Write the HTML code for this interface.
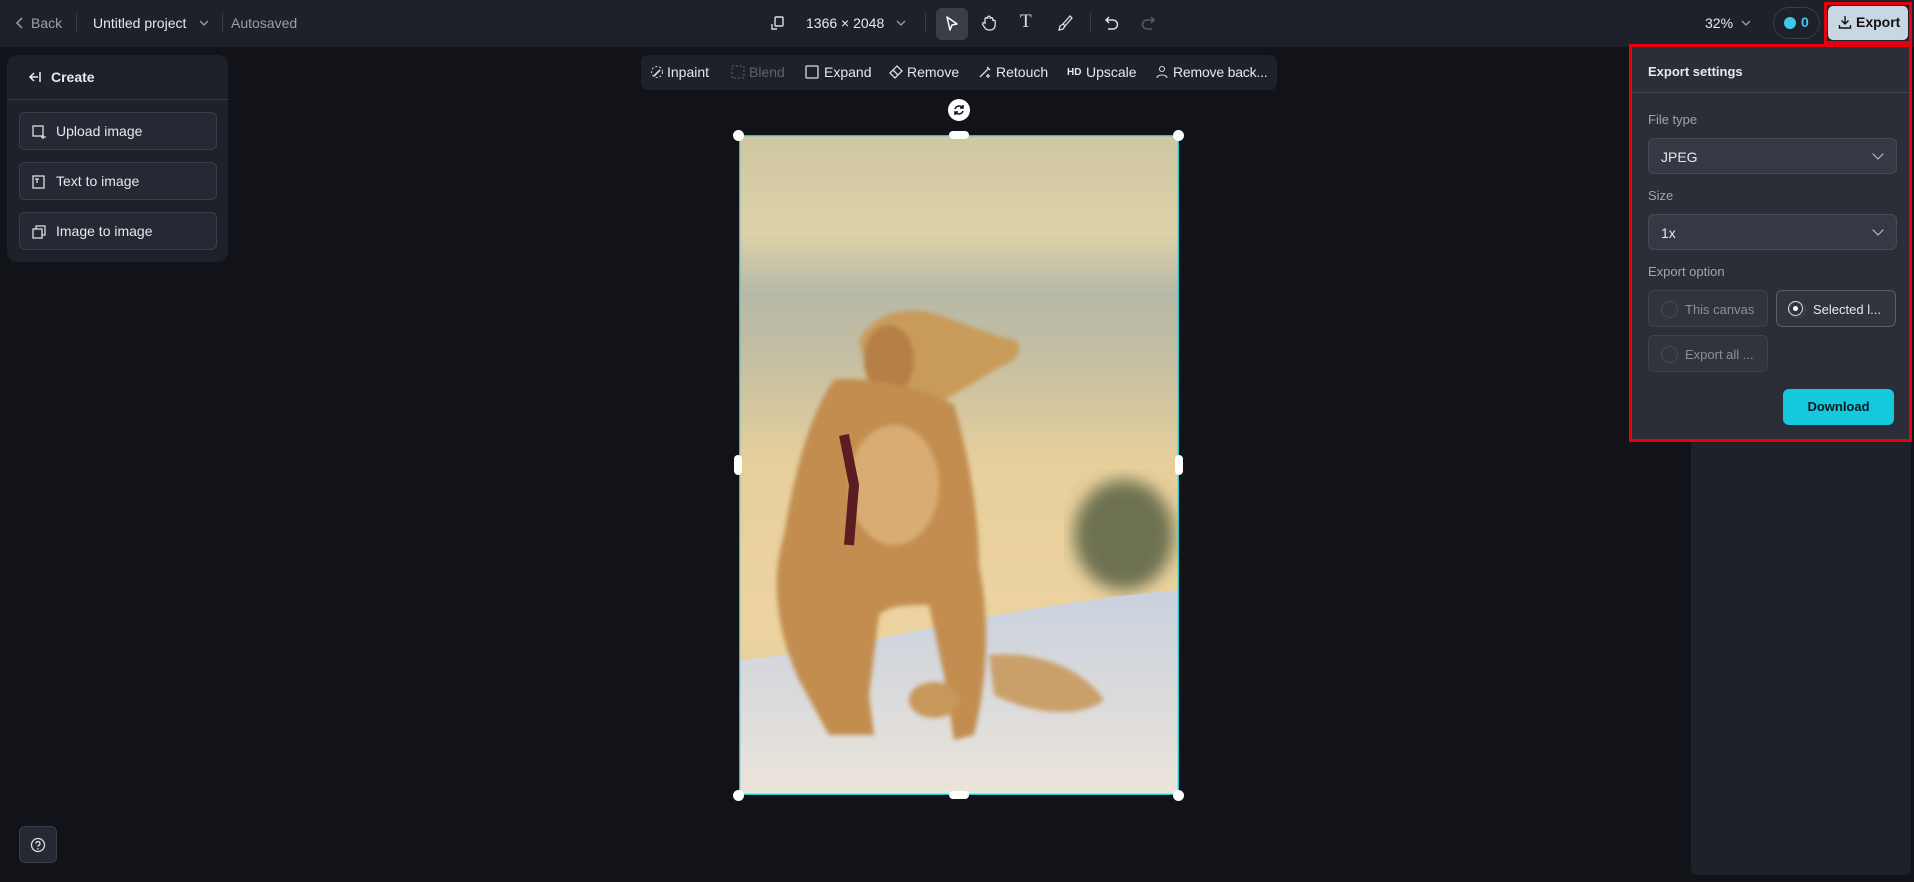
<!DOCTYPE html>
<html><head><meta charset="utf-8"><style>
*{box-sizing:border-box;margin:0;padding:0}
body{width:1914px;height:882px;background:#111318;font-family:"Liberation Sans",sans-serif;color:#e6e8ec;position:relative;overflow:hidden;font-size:14px}
.top{position:absolute;left:0;top:0;width:1914px;height:47px;background:#1e2129}
.abs{position:absolute}
.t{position:absolute;white-space:nowrap}
.panel{position:absolute;left:7px;top:55px;width:221px;height:207px;background:#1e2129;border-radius:10px}
.btn{position:absolute;left:12px;width:198px;height:38px;border:1px solid #3a3e48;background:#252933;border-radius:6px;font-size:14px;padding:10px 0 0 36px;color:#e6e8ec}
.btn svg{position:absolute;left:11px;top:11px}
.tb{position:absolute;left:641px;top:55px;width:636px;height:35px;background:#1e2129;border-radius:7px;font-size:14px}
.tb span{position:absolute;top:9px}
.pop{position:absolute;left:1629px;top:44px;width:283px;height:398px;border:3px solid #e8000f;background:#2b2e37}
.lab{position:absolute;left:16px;font-size:13px;color:#a0a4ad}
.sel{position:absolute;left:16px;width:249px;height:36px;border:1px solid #454a55;background:#353944;border-radius:6px;font-size:14px;padding:10px 0 0 12px}
.sel:after{content:"";position:absolute;right:14px;top:11px;width:7px;height:7px;border-right:1.5px solid #ccc;border-bottom:1.5px solid #ccc;transform:rotate(45deg)}
.rad{position:absolute;width:120px;height:37px;border:1px solid #3d414c;background:#30343d;border-radius:6px;font-size:13px;padding:11px 0 0 36px;color:#8b8f98}
.rad:before{content:"";position:absolute;left:12px;top:10px;width:15px;height:15px;border-radius:50%;border:1px solid #454a55}
</style></head><body>
<div class="top"></div>
<svg class="abs" style="left:15px;top:16px" width="10" height="14"><path d="M7 2 L2 7 L7 12" stroke="#9aa0a8" stroke-width="1.5" fill="none"/></svg>
<div class="t" style="left:31px;top:15px;color:#9aa0a8;font-size:14px">Back</div>
<div class="abs" style="left:76px;top:13px;width:1px;height:20px;background:#3a3e48"></div>
<div class="t" style="left:93px;top:15px;font-size:14px">Untitled project</div>
<svg class="abs" style="left:198px;top:18px" width="12" height="10"><path d="M2 3 L6 7 L10 3" stroke="#9aa0a8" stroke-width="1.3" fill="none"/></svg>
<div class="abs" style="left:222px;top:13px;width:1px;height:20px;background:#3a3e48"></div>
<div class="t" style="left:231px;top:15px;color:#9aa0a8;font-size:14px">Autosaved</div>
<svg class="abs" style="left:770px;top:15px" width="16" height="16"><rect x="5" y="2" width="8" height="9" rx="1" stroke="#ddd" fill="none" stroke-width="1.4"/><path d="M2 9v5h5" stroke="#ddd" fill="none" stroke-width="1.4"/></svg>
<div class="t" style="left:806px;top:15px;font-size:14px">1366 × 2048</div>
<svg class="abs" style="left:895px;top:18px" width="12" height="10"><path d="M2 3 L6 7 L10 3" stroke="#9aa0a8" stroke-width="1.3" fill="none"/></svg>
<div class="abs" style="left:925px;top:13px;width:1px;height:20px;background:#3a3e48"></div>
<div class="abs" style="left:936px;top:8px;width:32px;height:32px;background:#3a3e48;border-radius:6px"></div>
<svg class="abs" style="left:944px;top:15px" width="16" height="18"><path d="M3 2 L13 9 L8 10 L6 15 Z" stroke="#fff" fill="none" stroke-width="1.5" stroke-linejoin="round"/></svg>
<svg class="abs" style="left:980px;top:14px" width="18" height="18"><path d="M5 9V5a1.3 1.3 0 0 1 2.6 0V3.5a1.3 1.3 0 0 1 2.6 0V5a1.3 1.3 0 0 1 2.6 0v2a1.3 1.3 0 0 1 2.4 0v4a5 5 0 0 1-5 5H9a5 5 0 0 1-4-2L3 11a1.3 1.3 0 0 1 2-2z" stroke="#ddd" fill="none" stroke-width="1.3"/></svg>
<div class="t" style="left:1020px;top:11px;font-size:19px;font-family:'Liberation Serif',serif;color:#ddd">T</div>
<svg class="abs" style="left:1056px;top:14px" width="18" height="18"><path d="M14 2 L7 10 L9 12 L16 4 Z M7 10 L4 12 L3 16 L7 15 L9 12" stroke="#ddd" fill="none" stroke-width="1.3"/></svg>
<div class="abs" style="left:1090px;top:13px;width:1px;height:20px;background:#3a3e48"></div>
<svg class="abs" style="left:1103px;top:14px" width="18" height="18"><path d="M6 3 L3 6 L6 9 M3 6 H10 a4.5 4.5 0 0 1 0 9 H5" stroke="#ddd" fill="none" stroke-width="1.5"/></svg>
<svg class="abs" style="left:1139px;top:14px" width="18" height="18"><path d="M12 3 L15 6 L12 9 M15 6 H8 a4.5 4.5 0 0 0 0 9 H13" stroke="#555a63" fill="none" stroke-width="1.5"/></svg>
<div class="t" style="left:1705px;top:15px;font-size:14px">32%</div>
<svg class="abs" style="left:1740px;top:18px" width="12" height="10"><path d="M2 3 L6 7 L10 3" stroke="#9aa0a8" stroke-width="1.3" fill="none"/></svg>
<div class="abs" style="left:1773px;top:7px;width:47px;height:32px;border:1px solid #3a3e48;border-radius:16px"></div>
<div class="abs" style="left:1784px;top:17px;width:12px;height:12px;border-radius:50%;background:#3ec9e8"></div>
<div class="t" style="left:1801px;top:14px;font-size:14px;color:#3ec9e8;font-weight:bold">0</div>
<div class="abs" style="left:1824px;top:2px;width:88px;height:42px;border:3px solid #e8000f"></div>
<div class="abs" style="left:1828px;top:6px;width:80px;height:34px;background:#c9d6e3;border-radius:5px"></div>
<svg class="abs" style="left:1838px;top:15px" width="14" height="14"><path d="M7 1v8M3.5 5.5L7 9l3.5-3.5M1.5 10v3h11v-3" stroke="#111" fill="none" stroke-width="1.4"/></svg>
<div class="t" style="left:1856px;top:14px;font-size:14px;color:#111;font-weight:bold">Export</div>

<div class="panel">
<svg class="abs" style="left:20px;top:15px" width="16" height="14"><path d="M7 3L3 7L7 11M3 7h8M13 2v10" stroke="#eee" fill="none" stroke-width="1.5"/></svg>
<div class="t" style="left:44px;top:14px;font-size:14px;font-weight:bold">Create</div>
<div class="abs" style="left:0;top:44px;width:221px;height:1px;background:#343843"></div>
<div class="btn" style="top:57px"><svg width="16" height="16"><rect x="2" y="2" width="10" height="10" stroke="#ddd" fill="none" stroke-width="1.3"/><path d="M12 10v5M10 13h5" stroke="#ddd" stroke-width="1.3"/></svg>Upload image</div>
<div class="btn" style="top:107px"><svg width="16" height="16"><rect x="2" y="2" width="11" height="12" stroke="#ddd" fill="none" stroke-width="1.3"/><path d="M4 5h4M6 5v4" stroke="#ddd" stroke-width="1.3"/></svg>Text to image</div>
<div class="btn" style="top:157px"><svg width="16" height="16"><rect x="2" y="5" width="9" height="9" stroke="#ddd" fill="none" stroke-width="1.3"/><path d="M5 5V2h9v9h-3" stroke="#ddd" fill="none" stroke-width="1.3"/></svg>Image to image</div>
</div>

<div class="tb">
<span style="left:26px">Inpaint</span><svg class="abs" style="left:9px;top:10px" width="14" height="14"><circle cx="7" cy="7" r="5.5" stroke="#ddd" fill="none" stroke-dasharray="2 2"/><path d="M4 11l6-6" stroke="#ddd" stroke-width="1.6"/></svg>
<span style="left:108px;color:#5d626b">Blend</span><svg class="abs" style="left:90px;top:10px" width="14" height="14"><rect x="1" y="1" width="12" height="12" stroke="#5d626b" fill="none" stroke-dasharray="2 2"/></svg>
<span style="left:183px">Expand</span><svg class="abs" style="left:164px;top:10px" width="14" height="14"><rect x="1" y="1" width="12" height="12" rx="1" stroke="#ddd" fill="none" stroke-width="1.3"/></svg>
<span style="left:266px">Remove</span><svg class="abs" style="left:248px;top:10px" width="14" height="14"><path d="M8 1l5 5-7 7-5-5z M4 5l5 5" stroke="#ddd" fill="none" stroke-width="1.3"/></svg>
<span style="left:355px">Retouch</span><svg class="abs" style="left:337px;top:10px" width="14" height="14"><path d="M2 12L11 3M9 2l3 3M10 9v4M8 11h4" stroke="#ddd" fill="none" stroke-width="1.3"/></svg>
<span style="left:445px">Upscale</span><span style="left:426px;font-size:10px;font-weight:bold;top:12px">HD</span>
<span style="left:532px;letter-spacing:-0.2px">Remove back...</span><svg class="abs" style="left:514px;top:10px" width="14" height="14"><circle cx="7" cy="4" r="2.5" stroke="#ddd" fill="none"/><path d="M2 13c0-4 10-4 10 0" stroke="#ddd" fill="none"/></svg>
</div>

<div class="abs" style="left:948px;top:99px;width:22px;height:22px;border-radius:50%;background:#fff"></div>
<svg class="abs" style="left:952px;top:103px" width="14" height="14"><path d="M11 5a4.5 4.5 0 0 0-8 1M3 9a4.5 4.5 0 0 0 8-1M11 2v3h-3M3 12V9h3" stroke="#111" fill="none" stroke-width="1.5"/></svg>

<svg class="abs" style="left:739px;top:135px" width="440" height="660">
<defs>
<linearGradient id="sky" x1="0" y1="0" x2="0" y2="1">
<stop offset="0" stop-color="#cfc7a3"/><stop offset=".15" stop-color="#ddd1a8"/><stop offset=".24" stop-color="#b7b9a8"/><stop offset=".33" stop-color="#c3bea3"/><stop offset=".5" stop-color="#e7cf9c"/><stop offset=".75" stop-color="#ecd3a0"/><stop offset="1" stop-color="#d8c39c"/></linearGradient>
<linearGradient id="snow" x1="0" y1="0" x2="0" y2="1"><stop offset="0" stop-color="#c9d1de"/><stop offset="1" stop-color="#ebe4da"/></linearGradient>
<filter id="b"><feGaussianBlur stdDeviation="8"/></filter><filter id="b2"><feGaussianBlur stdDeviation="2.5"/></filter>
</defs>
<rect width="440" height="660" fill="url(#sky)"/>
<ellipse cx="385" cy="400" rx="50" ry="55" fill="#4f5a3c" filter="url(#b)" opacity=".8"/>
<path d="M0 525 C120 515 260 470 440 455 L440 660 L0 660Z" fill="url(#snow)"/>
<g filter="url(#b2)">
<!-- head -->
<path d="M120 205 C135 175 175 170 200 180 C225 188 250 200 275 205 C285 210 280 225 265 230 C245 240 225 255 205 265 C180 270 150 250 130 240Z" fill="#c99b5a"/>
<ellipse cx="150" cy="225" rx="25" ry="35" fill="#b57f45"/>
<!-- body -->
<path d="M95 245 C130 240 190 255 215 270 C230 320 240 380 240 430 C250 480 250 540 235 600 L215 605 L205 540 L190 470 C170 470 150 470 140 480 L130 560 L135 600 L90 600 L60 545 C40 500 30 450 45 400 C55 340 70 280 95 245Z" fill="#c28d4f"/>
<ellipse cx="155" cy="350" rx="45" ry="60" fill="#d8ac72"/>
<path d="M250 520 C300 515 345 535 365 565 C340 585 290 578 255 560Z" fill="#caa06a"/>
<ellipse cx="195" cy="565" rx="25" ry="18" fill="#c8975a"/>
</g>
<path d="M105 300 L115 350 L110 410" stroke="#5a1e22" stroke-width="10" fill="none"/>
<rect x="0.5" y="0.5" width="439" height="659" fill="none" stroke="#1ec8cc" stroke-width="1.5"/>
</svg>
<div class="abs" style="left:733px;top:130px;width:11px;height:11px;border-radius:50%;background:#fff"></div>
<div class="abs" style="left:1173px;top:130px;width:11px;height:11px;border-radius:50%;background:#fff"></div>
<div class="abs" style="left:733px;top:790px;width:11px;height:11px;border-radius:50%;background:#fff"></div>
<div class="abs" style="left:1173px;top:790px;width:11px;height:11px;border-radius:50%;background:#fff"></div>
<div class="abs" style="left:949px;top:131px;width:20px;height:8px;border-radius:4px;background:#fff"></div>
<div class="abs" style="left:949px;top:791px;width:20px;height:8px;border-radius:4px;background:#fff"></div>
<div class="abs" style="left:734px;top:455px;width:8px;height:20px;border-radius:4px;background:#fff"></div>
<div class="abs" style="left:1175px;top:455px;width:8px;height:20px;border-radius:4px;background:#fff"></div>

<div class="abs" style="left:1691px;top:47px;width:220px;height:828px;background:#1e2129;border-radius:6px"></div>

<div class="pop">
<div class="t" style="left:16px;top:17px;font-size:13px;font-weight:bold">Export settings</div>
<div class="abs" style="left:0;top:45px;width:277px;height:1px;background:#3d414c"></div>
<div class="lab" style="top:65px">File type</div>
<div class="sel" style="top:91px">JPEG</div>
<div class="lab" style="top:141px">Size</div>
<div class="sel" style="top:167px">1x</div>
<div class="lab" style="top:217px">Export option</div>
<div class="rad" style="left:16px;top:243px">This canvas</div>
<div class="rad" style="left:144px;top:243px;color:#e6e8ec;border-color:#5a5f6a">Selected l...</div>
<div class="abs" style="left:156px;top:254px;width:15px;height:15px;border-radius:50%;border:1.5px solid #ddd"></div>
<div class="abs" style="left:161px;top:259px;width:5px;height:5px;border-radius:50%;background:#fff"></div>
<div class="rad" style="left:16px;top:288px">Export all ...</div>
<div class="abs" style="left:151px;top:342px;width:111px;height:36px;background:#14c8de;border-radius:6px;color:#0d1a22;font-weight:bold;font-size:13px;text-align:center;line-height:36px">Download</div>
</div>

<div class="abs" style="left:19px;top:826px;width:38px;height:37px;border:1px solid #3a3e48;background:#252933;border-radius:6px"></div>
<svg class="abs" style="left:30px;top:837px" width="16" height="16"><circle cx="8" cy="8" r="6.5" stroke="#ddd" fill="none" stroke-width="1.3"/><path d="M6 6.5a2 2 0 1 1 2.5 2c-.5.2-.5.6-.5 1.2" stroke="#ddd" fill="none" stroke-width="1.3"/><circle cx="8" cy="11.8" r=".8" fill="#ddd"/></svg>
</body></html>
